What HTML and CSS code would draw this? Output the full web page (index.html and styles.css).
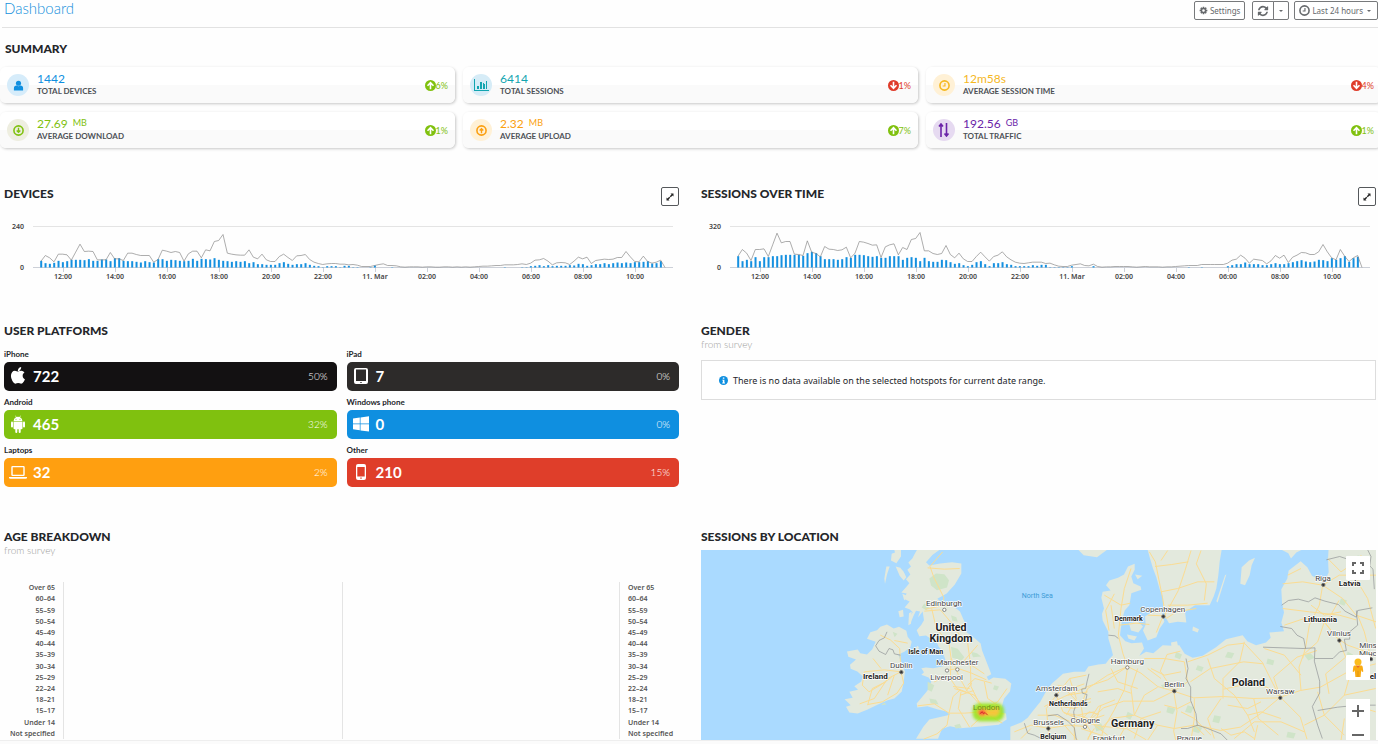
FILE: index.html
```html
<!DOCTYPE html>
<html lang="en">
<head>
    <meta charset="UTF-8">
    <meta name="viewport" content="width=device-width, initial-scale=1.0">
    <title>Dashboard</title>
    <link rel="stylesheet" href="styles.css">
</head>
<body>
    <svg class="sprite" aria-hidden="true">
        <symbol id="arrow-up" viewBox="0 0 24 24">
            <circle cx="12" cy="12" r="12" fill="currentColor"/>
            <path d="M12 20V6M5.500 12.500L12 6l6.500 6.500" fill="none" stroke="#fff" stroke-width="3.500"/>
        </symbol>
        <symbol id="arrow-down" viewBox="0 0 24 24">
            <circle cx="12" cy="12" r="12" fill="currentColor"/>
            <path d="M12 4v14M5.500 11.500L12 18l6.500-6.500" fill="none" stroke="#fff" stroke-width="3.500"/>
        </symbol>
        <symbol id="clock" viewBox="0 0 24 24">
            <circle cx="12" cy="12" r="10" fill="none" stroke="currentColor" stroke-width="3.500"/>
            <path d="M13 6.500V13H8" fill="none" stroke="currentColor" stroke-width="2.500"/>
        </symbol>
        <symbol id="expand" viewBox="0 0 16 16">
            <path d="M9 1h6v6l-2-2-3.500 3.500-2-2L11 3zM7 15H1V9l2 2 3.500-3.500 2 2L5 13z" fill="currentColor"/>
        </symbol>
    </svg>

    <main>
        <header class="topbar">
            <h1>Dashboard</h1>
            <div class="toolbar">
                <button class="btn" type="button">
                    <svg class="icon-sm" viewBox="0 0 1792 1792"><path fill="currentColor" d="M1152 896q0-106-75-181t-181-75-181 75-75 181 75 181 181 75 181-75 75-181zm512-109v222q0 12-8 23t-20 13l-185 28q-19 54-39 91 35 50 107 138 10 12 10 25t-9 23q-27 37-99 108t-94 71q-12 0-26-9l-138-108q-44 23-91 38-16 136-29 186-7 28-36 28h-222q-14 0-24.500-8.500t-11.500-21.500l-28-184q-49-16-90-37l-141 107q-10 9-25 9-14 0-25-11-126-114-165-168-7-10-7-23 0-12 8-23 15-21 51-66.500t54-70.500q-27-50-41-99l-183-27q-13-2-21-12.500t-8-23.500v-222q0-12 8-23t19-13l186-28q14-46 39-92-40-57-107-138-10-12-10-24 0-10 9-23 26-36 98.500-107.500t94.500-71.500q13 0 26 10l138 107q44-23 91-38 16-136 29-186 7-28 36-28h222q14 0 24.500 8.500t11.500 21.500l28 184q49 16 90 37l142-107q9-9 24-9 13 0 25 10 129 119 165 170 7 8 7 22 0 12-8 23-15 21-51 66.500t-54 70.500q26 50 41 98l183 28q13 2 21 12.500t8 23.500z"/></svg>
                    Settings
                </button>
                <div class="btn-group">
                    <button class="btn" type="button" aria-label="Refresh">
                        <svg class="icon-lg" viewBox="0 0 1792 1792"><path fill="currentColor" d="M1639 1056q0 5-1 7-64 268-268 434.500t-478 166.500q-146 0-282.500-55t-243.500-157l-129 129q-19 19-45 19t-45-19-19-45v-448q0-26 19-45t45-19h448q26 0 45 19t19 45-19 45l-137 137q71 66 161 102t187 36q134 0 250-65t186-179q11-17 53-117 8-23 30-23h192q13 0 22.500 9.500t9.500 22.500zm25-800v448q0 26-19 45t-45 19h-448q-26 0-45-19t-19-45 19-45l138-138q-148-137-349-137-134 0-250 65t-186 179q-11 17-53 117-8 23-30 23h-199q-13 0-22.500-9.500t-9.500-22.500v-7q65-268 270-434.500t480-166.500q146 0 284 55.500t245 156.500l130-129q19-19 45-19t45 19 19 45z"/></svg>
                    </button>
                    <button class="btn" type="button" aria-label="Refresh options"><span class="caret"></span></button>
                </div>
                <button class="btn" type="button">
                    <svg class="icon-md"><use href="#clock"/></svg>
                    Last 24 hours
                    <span class="caret"></span>
                </button>
            </div>
        </header>

        <h2 class="summary-title">Summary</h2>
        <section class="summary">
            <article class="card blue">
                <span class="badge"><svg viewBox="0 0 12 12"><circle cx="6" cy="3.500" r="2.800" fill="currentColor"/><path d="M1 11.500V9q0-3 3-3 2 1.500 4 0 3 0 3 3v2.500z" fill="currentColor"/></svg></span>
                <div class="stat"><p class="value">1442</p><p class="label">Total devices</p></div>
                <span class="trend up"><svg><use href="#arrow-up"/></svg>6%</span>
            </article>
            <article class="card teal">
                <span class="badge wide"><svg viewBox="0 0 15 12"><path d="M0 0h1v11h14v1H0zM3 7h2v3H3zM6 3h2v7H6zM9 4h1v6H9zM10 5h1v5h-1zM12 2h1v8h-1z" fill="currentColor"/></svg></span>
                <div class="stat"><p class="value">6414</p><p class="label">Total sessions</p></div>
                <span class="trend down"><svg><use href="#arrow-down"/></svg>1%</span>
            </article>
            <article class="card yellow">
                <span class="badge"><svg><use href="#clock"/></svg></span>
                <div class="stat"><p class="value">12m58s</p><p class="label">Average session time</p></div>
                <span class="trend down"><svg><use href="#arrow-down"/></svg>4%</span>
            </article>
            <article class="card green">
                <span class="badge"><svg viewBox="0 0 24 24"><g fill="none" stroke="currentColor"><circle cx="12" cy="12" r="10" stroke-width="3.500"/><path d="M12 6v10M8 12l4 4 4-4" stroke-width="3"/></g></svg></span>
                <div class="stat"><p class="value">27.69 <small>MB</small></p><p class="label">Average download</p></div>
                <span class="trend up"><svg><use href="#arrow-up"/></svg>1%</span>
            </article>
            <article class="card orange">
                <span class="badge"><svg viewBox="0 0 24 24"><g fill="none" stroke="currentColor"><circle cx="12" cy="12" r="10" stroke-width="3.500"/><path d="M12 18V8M8 12l4-4 4 4" stroke-width="3"/></g></svg></span>
                <div class="stat"><p class="value">2.32 <small>MB</small></p><p class="label">Average upload</p></div>
                <span class="trend up"><svg><use href="#arrow-up"/></svg>7%</span>
            </article>
            <article class="card purple">
                <span class="badge tall"><svg viewBox="0 0 12 14"><path d="M3 14V1M1 3.500L3 1l2 2.500M8.500 0v13M6.500 10.500l2 2.500 2-2.500" fill="none" stroke="currentColor" stroke-width="1.600"/></svg></span>
                <div class="stat"><p class="value">192.56 <small>GB</small></p><p class="label">Total traffic</p></div>
                <span class="trend up"><svg><use href="#arrow-up"/></svg>1%</span>
            </article>
        </section>

        <div class="panels">
            <section class="panel charts-row">
                <div class="panel-head">
                    <h2>Devices</h2>
                    <button class="expand" type="button" aria-label="Expand devices"><svg><use href="#expand"/></svg></button>
                </div>
                <svg class="chart" id="devicesChart" viewBox="0 0 675 65"></svg>
            </section>
            <section class="panel charts-row">
                <div class="panel-head">
                    <h2>Sessions over time</h2>
                    <button class="expand" type="button" aria-label="Expand sessions"><svg><use href="#expand"/></svg></button>
                </div>
                <svg class="chart" id="sessionsChart" viewBox="0 0 675 65"></svg>
            </section>

            <section class="panel platforms-row">
                <h2>User platforms</h2>
                <div class="platforms">
                    <div class="platform">
                        <p>iPhone</p>
                        <div class="bar black">
                            <svg viewBox="0 0 1792 1792"><path fill="currentColor" d="M1585 1215q-39 125-123 250-129 196-257 196-49 0-140-32-86-32-151-32-61 0-142 33-81 34-132 34-152 0-301-259-147-261-147-503 0-228 113-374 113-144 284-144 72 0 177 30 104 30 138 30 45 0 143-34 102-34 173-34 119 0 213 65 52 36 104 100-79 67-114 118-65 94-65 207 0 124 69 223t158 126zm-376-1173q0 61-29 136-30 75-93 138-54 54-108 72-37 11-104 17 3-149 78-257 74-107 250-148 1 3 2.500 11t2.500 11q0 4 .5 10t.5 10z"/></svg>
                            <strong>722</strong><span>50%</span>
                        </div>
                    </div>
                    <div class="platform">
                        <p>iPad</p>
                        <div class="bar charcoal">
                            <svg viewBox="0 0 18 18"><path fill="currentColor" fill-rule="evenodd" d="M4 1h10q2 0 2 2v12q0 2-2 2H4q-2 0-2-2V3q0-2 2-2zm0 1.500v11.500h10V2.500zM8.300 15v1h1.400v-1z"/></svg>
                            <strong>7</strong><span>0%</span>
                        </div>
                    </div>
                    <div class="platform">
                        <p>Android</p>
                        <div class="bar green-bg">
                            <svg viewBox="0 0 18 18"><g fill="currentColor"><path d="M4.500 6.200Q4.700 3 7 2.200L6.200.8l.4-.2.9 1.400q1.500-.5 3 0l.9-1.400.4.2L11 2.200q2.300.8 2.500 4z"/><path d="M4.500 6.800h9v6.400q0 1-1 1h-.8V17q0 1-1 1t-1-1v-2.800H8.300V17q0 1-1 1t-1-1v-2.800h-.8q-1 0-1-1z"/><rect x="2" y="6.600" width="2" height="6" rx="1"/><rect x="14" y="6.600" width="2" height="6" rx="1"/></g><circle cx="7" cy="4.300" r=".5" fill="#80c10f"/><circle cx="11" cy="4.300" r=".5" fill="#80c10f"/></svg>
                            <strong>465</strong><span>32%</span>
                        </div>
                    </div>
                    <div class="platform">
                        <p>Windows phone</p>
                        <div class="bar blue-bg">
                            <svg viewBox="0 0 18 18"><path fill="currentColor" d="M1 3.500l6.800-1v6H1zM8.500 2.400L17 1.200v7.300H8.500zM1 9.300h6.800v6l-6.800-1zM8.500 9.300H17v7.300l-8.500-1.200z"/></svg>
                            <strong>0</strong><span>0%</span>
                        </div>
                    </div>
                    <div class="platform">
                        <p>Laptops</p>
                        <div class="bar orange-bg">
                            <svg viewBox="0 0 18 18"><path fill="currentColor" fill-rule="evenodd" d="M3.500 3h11q1.200 0 1.200 1.200v7.600q0 1.200-1.200 1.200h-11q-1.200 0-1.200-1.200V4.200Q2.300 3 3.500 3zm.2 1.300v7.400h10.600V4.300zM0 14h18v.8q0 1-1.500 1h-15Q0 15.800 0 14.800z"/></svg>
                            <strong>32</strong><span>2%</span>
                        </div>
                    </div>
                    <div class="platform">
                        <p>Other</p>
                        <div class="bar red-bg">
                            <svg viewBox="0 0 18 18"><path fill="currentColor" fill-rule="evenodd" d="M6 1h6q2 0 2 2v12q0 2-2 2H6q-2 0-2-2V3q0-2 2-2zm-.7 3v9.500h7.400V4zM8.300 14.500v1.300h1.400v-1.300z"/></svg>
                            <strong>210</strong><span>15%</span>
                        </div>
                    </div>
                </div>
            </section>
            <section class="panel platforms-row">
                <h2>Gender</h2>
                <p class="sub">from survey</p>
                <div class="notice">
                    <svg viewBox="0 0 16 16"><circle cx="8" cy="8" r="8" fill="#0f8fe0"/><path d="M6.800 2.800h2.700v2.200H6.800zM5.800 6.500h3.800v5h1v1.700H5.700v-1.700h1.200V8.200H5.800z" fill="#fff"/></svg>
                    There is no data available on the selected hotspots for current date range.
                </div>
            </section>

            <section class="panel">
                <h2>Age breakdown</h2>
                <p class="sub">from survey</p>
                <div class="age-chart">
                    <ul class="ages" id="agesLeft"></ul>
                    <div class="plot"></div>
                    <div class="plot"></div>
                    <ul class="ages right" id="agesRight"></ul>
                </div>
            </section>
            <section class="panel">
                <h2>Sessions by location</h2>
                <div class="map">
                    <svg class="map-canvas" viewBox="20 74 2025 571" preserveAspectRatio="xMidYMid slice">
                        <defs>
                            <filter id="soft" x="-20%" y="-30%" width="140%" height="160%"><feGaussianBlur stdDeviation="5"/></filter>
                        </defs>
                        <rect x="0" y="0" width="2100" height="700" fill="#aadaff"/>

                        <!-- British Isles -->
                        <g class="land">
                            <path d="M668 74l-8 14-6 12-12 12 8 12-11 10 9 14-13 14 10 12-8 10-16 18 16 3-9 16 18 8-15 18 16 6 8 8-10 16 4 16 8-20 8-16 12 2-6 18 14-18 4 26-8 14-14 16 8 18 20-2 18 12 12 4 8 18 10 10 10 28-6 20-30 6-22-2-14 2 8 12-8 8 22 8 8 12-12 28-32 38 2 12 30-4 32 10 26 6 10 10-36 8-26 6-18 22-16 26-6 10h66l12-30 24-8 30 6 28-2 42-4 46-4 24-16-2-18-28-4 14-12 8-28 18-22 4-24-18-14-36-4-14 8-6-10 14-8-14-36-14-36-4-20-18-16-24-18-6-30-14-32-26-20-30-8-12-10 28-16 24-26 20-34v-30l-28-4-36 4-32 6-10-10 20-22 22-16 4-10z"/>
                            <path d="M578 298l20 12 16-5 22 12 4 18 12 15-4 16-18 14-18 8 6 17 7 15 7 20-4 30-6 30-22 20-20 5-34 15-26 13-30 12-25-3-10-17 14-5-18-18 24-4-10-18 26-6-11-11 21-14 4-16-16-14-20-8-2-12 18-16-23-8-4-16 32-6 8 11 20 4 16-16 10-22-26-9 10-20 20-6 10-10z"/>
                            <path d="M592 86l10-4-2-8h20v20l-14 20-16-8zM576 124h10l-8 24-6 28-2-16zM604 124l14 4 10 12 8 16-8 10-12-14zM624 206l14 6-8 14zM612 258l14-4 2 20-12 2zM644 264l8-4-2 36-8 4zM662 370l8-8 4 6-8 10z"/>
                        </g>

                        <g transform="translate(1020)">
                            <g class="land">
                                <path d="M-72 645v-40l34-14 18-13 12-16 26-32 14-26 20-28 34-30 34-6h32l10-16 30-6 22-2 12-16 10-10-6-24-8-26v-20l-17-34-2-20 6-16-8-32 4-18 24-4-14-16 10-14 26-8 18-10 12-24 20-8v18l-10 20 6 20 22 10 2 10-30 10-2 14-4 22-14 16-8 28-6 46 16 18 18 6 32-2 6 18-14 22 20-12 22 4 28-24 30 2 20-2 16 26 24 12 30-6 40-26 30-24 50-12 14 18 26 12 30-8 14-14-4-16 44-4-8-26 8-30-6-30-2-40 18-32 4-24 36-28 20 18 14 26 36 20 14-30-2-40 2-36h200v600z"/>
                                <path d="M340 74l6 22 10 34 10 26 10 36 10 24v24l10 40 8 14 26-4 26 2-4-32 30-20 44 0 12-26 8-24 6-40 4-40 6-36zM332 274l36-24 16 14 6 26-14 20-10 26-26 10-14-30 8-18zM284 294l26-6 16 16-14 18-22-6zM278 328l30 6-8 12-18-6zM576 148l-26 84-4-4 26-78zM662 98l-18 8-22 20-4 50 14 4 14-30 6-30zM476 304l18 8-4 10-16-6zM132 74l16 16 40 6 30-22zM742 74h60l-16 8-16 18-8-16zM302 148l22 4-14 10zM410 352l18-4 4 20-20 2z"/>
                            </g>
                        </g>

                        <g class="parks">
                            <path d="M705 160l20-15 25 2 14 18-6 22-30 8-18-14zM770 365l20 6 20 25-8 10-28-8zM700 470l20 10-8 20-12-6zM705 520l20 4 8 14-24-4zM690 235l16 10-10 10-14-8zM865 545l12-6 10 12-12 6zM780 600l16-4 6 12-18 2zM900 480l14 4-6 12-12-4zM770 270l16 6 4 14-16-4zM830 380l18 4 12 10-24 2zM595 320l14 6-8 10zM560 540l10-8 6 6z"/>
                            <path d="M1480 540l18 6-8 18-18-4zM1560 570l20 4-6 20-20-4zM1420 545l24 6-8 16-20-6zM1200 600l20-6 10 18-24 6zM1445 380l18 8-6 14-16-6zM1600 380l20 4-8 16-20-4zM1830 390l18-6 14 14-20 8zM1720 400l20 6-4 14-20-4zM1960 380l16 8-4 18-18-4zM1940 220l18 6-8 16-16-6zM1510 420l18 6-6 14-18-6zM1500 600l24 8-10 16-20-6zM1400 480l16-6 8 12-16 6zM1990 90l20 6-4 20-20-4zM1300 560l16 8-8 16-14-8zM1780 620l24 4-6 16-22-4z"/>
                        </g>

                        <g class="roads">
                            <path d="M745 80l-38 44 12 34 30 60-6 24-50 10M690 258l48-4 34 40 24 36 24 24 8 60 2 70 30 60 20 28M712 250l14 60 38 44 6 44 26 60 20 36 46 50M752 436l40-6 40 14 44 20M770 400l-2 60 20 30 26 10 18-26M780 490l60 20 30 40 40-20 28-40M670 542l50-6 44 28 46 0 60-4 60 6M764 566l-6 34-30 26-40 16M764 564l12-50 22-20M800 500l-8 50 34 56M830 604l44-40 50 30M870 470l10 50 30 20M720 470l40-20M700 128l50 4 46-2M850 360l-40 46 60 40M820 480l22-20 50 14M798 510l40-14M776 484l50 6"/>
                            <path d="M620 440l-50-6-60 6M620 440l-4-70-28-26-30-14M620 440l-40 20-40 60-44 16M620 440l8 34-20 30-44 26-44 8M600 450l-20 60M510 440l-6 40 20 20 34-20 34-24M560 430l-24-30M600 346l40 8M520 540l14-50 40-20"/>
                        </g>
                        <g class="roads" transform="translate(1020)">
                            <!-- Scandinavia -->
                            <path d="M345 80l18 30 14 70 8 40 10 60M470 76l-18 60-20 60-24 44-16 30M362 124l50-6 50-8M400 240l60 0 60-6M380 200l50-10 60-20 50 0M396 280l30-20 60-10M500 76l-14 40 30 60-6 50M400 76l-20 30M290 130l-20 60-10 60-8 80 14 56M210 210l50 30 28-6M230 240l10 70M340 270l46 2-20 50M255 300l50-6 40 4M240 206l-26 50 10 60"/>
                            <!-- Benelux and Germany -->
                            <path d="M266 386l14 38 40 20 50 40 48 14M280 424l-60 40-60 20-70 30-60 30M280 424l-10 70-30 60-34 60-6 30M418 498l-60 30-90 0-60 20-56 50M418 498l10 60-10 60 6 27M418 498l60 20 90-4 90 6 80-2M418 498l-40-60 20-50 40-10M66 510l20 50 60 30 60 14 70 6 60 34M40 610l60-10 52 4 40-60 50-20M-60 620l50-20 56 10-10 35M-40 640l30-30M66 510l-30 40 6 60M66 510l40-50 50-10M150 600l-10-60 20-50 60-40 60-26M106 460l20 60-30 50M160 500l-60 10M200 610l30-30 70-10 70 30 50 10M300 570l30-60 40-24M330 400l60 0 60 10 10 60-42 28M420 610l60-10 30 30M370 600l-30 45M270 610l-20 35M120 590l0 55M180 560l-50 10-40-6M200 540l-20 60 40 30M310 430l-20 60 10 80M340 430l40 30M90 600l40 45M10 570l50 0 50 20M130 570l60 20M140 610l60 20M60 540l60 10 50-20"/>
                            <path d="M70 480l40 10 40-14M100 500l30 30 40-10M110 570l30 14 24-24 30 8M150 590l20 30-10 25M190 500l60-10 40 14M230 430l20 40 60 20M250 600l50 10 40-14M390 540l40 10 40-20M380 560l-60 20-20 60M440 440l-50 10-40-20M440 560l40 20-10 65M180 610l-20 30M210 570l-30 10-20 20"/>
                            <!-- Poland and the Baltics -->
                            <path d="M460 410l60-20 60-30 50-6 56 60M468 470l60-40 100-20 60 6M630 350l-14 60-50 50 0 60M520 400l20 60 60 50 40 60 20 50M686 416l30 60 22 40 60 60 20 66M738 516l-60 50-60 40-60 10-70-16M738 516l60-20 60-10 90-50 76-20M738 516l-20-60 70-60 60-20M560 520l-40 60 20 60M658 520l14 60 60 50M600 640l60-50 80 0 70 30M690 370l60 20 50 60M800 496l-6-70 14-40M480 520l0 60 50 50M738 516l-40-30-60-10-70 16M810 600l60-30 60-60 94-20M850 500l20 70 60 60M930 580l-10 65M960 540l64 20M560 610l30 20 40-10 30 20M640 570l40-10 60 20M670 600l-10 45M580 540l60 10 40-20"/>
                            <path d="M865 180l-60-10-60 6M865 180l-10 60-30 60-10 60-10 40M865 180l50-30 110 0M865 180l60 40 40 50 60 20M745 250l80 10 90 10 50 14M750 300l60-20 60 10 40 50 30 20 84 30M870 290l-20 60-40 36M914 346l-40-50 40-70M880 100l40 40 60-40M760 150l40-20M914 346l20 50-60 50 10 60M1010 400l-60 40-20 70M1010 400l-20-80-20-50M980 90l-10 80 30 50 24 90M830 240l40 30 50-10"/>
                        </g>
                        <g class="borders">
                            <path d="M578 320l-8 18-16 8-10 16 10 16 20 10 10-18 12 4 4 12 18 4"/>
                            <path transform="translate(1020)" d="M222 330l20 2 10 8M164 446l-6 24-4 20-12 2 2 12 14 4-4 20-28 6-8 26 4 30M-30 594l10 30 20 6 20 10M40 572l30-4 30 20 20 20 6 36M455 400l6 30-6 30 14 26 0 40 16 40 4 36M490 600l-30 10-20 0M490 600l30 10 40 16 20 20M686 366l120 4 36-2M842 368l-2 40 16 60 0 36-22 40 16 56 14 40M738 304l34 6 16 20 20 10 6 30M742 240l20-14 30-4 30 8 20-12 30 10 40 10 20 20 34 18 4-20 44-8M966 256l4 44-24 20 0 22-16 0 6 34-20 4-20 20-54 0M876 104l40-10 30 10 20-6 30 14 20 20 4 60M850 556l60-10 60-6 54 0M1000 74l10 20-4 30"/>
                        </g>

                        <g class="cities">
                            <circle cx="750" cy="254" r="5"/><circle cx="758" cy="436" r="5"/><circle cx="789" cy="433" r="5"/>
                            <circle cx="1299" cy="427" r="5"/><circle cx="1172" cy="605" r="5"/>
                        </g>
                        <g class="capitals">
                            <circle cx="621" cy="441" r="5"/><circle cx="1407" cy="274" r="5"/><circle cx="1086" cy="510" r="5"/>
                            <circle cx="1440" cy="498" r="5"/><circle cx="1062" cy="610" r="5"/><circle cx="1758" cy="518" r="5"/>
                            <circle cx="1887" cy="179" r="5"/><circle cx="1935" cy="346" r="5"/><circle cx="2030" cy="402" r="5"/>
                        </g>

                        <g class="heat" filter="url(#soft)">
                            <rect x="835" y="534" width="94" height="54" rx="22" fill="#98e51c"/>
                            <path d="M846 560l16-12 30 6 14-10 12 14-12 16-30-2-14 4z" fill="#f8c32e"/>
                            <ellipse cx="863" cy="562" rx="11" ry="9" fill="#ff3d2e"/>
                        </g>
                        <text class="london" x="876" y="554">London</text>
                        <path d="M856 566l8-6 4 6 4-4 8 8" fill="none" stroke="#d6322b" stroke-width="3"/>

                        <text class="sea" x="1029" y="219">North Sea</text>
                        <g class="city-names">
                            <text x="749" y="243">Edinburgh</text><text x="621" y="429">Dublin</text>
                            <text x="789" y="421">Manchester</text><text x="757" y="464">Liverpool</text>
                            <text x="1405" y="262">Copenhagen</text><text x="1299" y="416">Hamburg</text>
                            <text x="1440" y="486">Berlin</text><text x="1087" y="498">Amsterdam</text>
                            <text x="1063" y="599">Brussels</text><text x="1173" y="595">Cologne</text>
                            <text x="1244" y="648">Frankfurt</text><text x="1485" y="648">Prague</text>
                            <text x="1758" y="506">Warsaw</text><text x="1886" y="167">Riga</text>
                            <text x="1934" y="334">Vilnius</text><text x="2027" y="369">Minsk</text><text x="2027" y="393">Мінск</text>
                        </g>
                        <g class="country-names">
                            <text class="big" x="770" y="319">United</text><text class="big" x="770" y="350">Kingdom</text>
                            <text class="big" x="1315" y="606">Germany</text><text class="big" x="1662" y="483">Poland</text>
                            <text x="543" y="462">Ireland</text><text x="1878" y="290">Lithuania</text><text x="1966" y="184">Latvia</text>
                            <text x="2052" y="461">Belarus</text>
                            <text class="little" x="694" y="387">Isle of Man</text><text class="little" x="1303" y="289">Denmark</text>
                            <text class="little" x="1122" y="542">Netherlands</text><text class="little" x="1077" y="641">Belgium</text>
                        </g>
                    </svg>
                    <div class="map-controls">
                        <button type="button" aria-label="Full screen">
                            <svg viewBox="0 0 12 12"><path d="M1 4V1h3M8 1h3v3M11 8v3H8M4 11H1V8" fill="none" stroke="#666" stroke-width="2"/></svg>
                        </button>
                        <button class="pegman" type="button" aria-label="Street view">
                            <svg viewBox="0 0 12 20"><circle cx="6" cy="4" r="3.500" fill="#fbbc1e"/><path d="M2.500 7.500h7q1 0 1.200 1.500l.6 4.500-1.300.5-.8-2-.6 7H3.400l-.6-7-.8 2-1.300-.5.6-4.500q.2-1.500 1.200-1.500z" fill="#f9ab13"/><path d="M3.500 7q2.500 2 5 0L6 10z" fill="#e8662d"/><path d="M6 13v6" stroke="#d28a10" stroke-width=".6"/></svg>
                        </button>
                        <div class="zoom">
                            <button type="button" aria-label="Zoom in"><svg viewBox="0 0 12 12"><path d="M6 0v12M0 6h12" stroke="#666" stroke-width="2"/></svg></button>
                            <button type="button" aria-label="Zoom out"><svg viewBox="0 0 12 12"><path d="M0 6h12" stroke="#666" stroke-width="2"/></svg></button>
                        </div>
                    </div>
                </div>
            </section>
        </div>
    </main>
    <footer></footer>

    <script>
        // one entry per 10 minutes, starting at 11:10
        const devices = {
            max: 240,
            total: [19,36,29,17,40,40,38,22,46,70,48,49,48,23,23,23,45,26,26,21,43,43,39,36,36,36,16,24,52,49,45,48,45,19,41,49,49,29,53,50,78,81,99,43,40,38,37,37,53,31,26,40,23,18,18,33,40,30,21,35,36,39,24,16,12,9,11,12,12,10,10,8,9,7,3,3,3,6,9,11,6,6,5,2,1,2,2,2,1,2,2,1,1,2,2,1,2,1,2,1,2,3,4,4,5,6,6,8,8,8,9,11,9,13,22,23,27,19,8,14,15,14,9,19,31,26,31,12,21,23,25,24,25,30,30,48,32,18,17,34,18,13,16,22,0],
            bars: [20,13,11,14,20,16,19,23,23,23,22,25,20,20,24,24,19,28,28,20,19,19,17,15,19,16,15,25,25,20,23,22,20,19,20,26,20,26,25,24,28,23,20,19,17,19,17,19,13,16,10,10,8,8,8,13,16,11,8,10,10,13,8,5,4,1,4,4,4,1,5,5,1,1,0,0,1,6,0,0,0,1,0,0,0,0,0,0,0,0,0,0,0,0,0,0,0,0,0,0,0,0,0,0,0,0,0,1,0,0,0,1,1,4,5,7,4,7,4,5,5,5,7,6,11,10,5,7,10,10,13,10,13,15,13,15,13,16,16,17,19,12,13,19,0]
        };
        const sessions = {
            max: 320,
            total: [34,54,43,21,54,54,56,33,68,103,74,78,78,40,39,36,80,46,42,32,63,55,54,51,53,61,29,43,78,76,72,67,68,30,62,68,71,38,60,54,84,87,105,50,50,42,39,42,66,39,29,43,26,18,18,33,46,32,19,33,37,47,32,23,16,13,12,14,16,16,16,12,13,8,4,3,3,7,9,11,6,5,10,3,1,2,2,3,3,3,3,2,1,2,3,2,2,2,1,2,2,3,4,5,6,6,6,9,9,9,9,9,9,13,22,25,37,28,13,25,23,21,11,20,36,28,37,15,31,37,45,44,39,39,47,69,47,29,23,54,34,18,29,36,0],
            bars: [34,19,23,19,31,19,31,31,34,34,37,38,38,38,38,35,43,47,43,34,25,25,25,23,25,31,29,38,38,37,34,32,34,29,29,34,34,34,23,29,31,29,19,29,19,17,17,23,22,16,11,13,7,4,8,16,19,10,4,13,13,16,10,8,4,4,4,4,7,5,8,8,1,1,1,1,1,4,0,0,0,0,4,0,0,0,0,0,0,0,0,0,0,0,0,0,0,0,0,0,0,0,0,0,1,0,0,1,0,0,0,0,0,4,7,10,10,15,10,10,10,7,7,10,13,10,10,13,16,19,22,18,16,18,23,22,19,28,23,28,34,17,28,32,0]
        };
        const hours = ['12:00', '14:00', '16:00', '18:00', '20:00', '22:00', '11. Mar', '02:00', '04:00', '06:00', '08:00', '10:00'];
        const ages = ['Over 65', '60–64', '55–59', '50–54', '45–49', '40–44', '35–39', '30–34', '25–29', '22–24', '18–21', '15–17', 'Under 14', 'Not specified'];

        function drawChart(id, data) {
            const step = 13 / 3;
            const base = 47.5;
            let out = '<path class="grid" d="M29 6.500H669"/><path class="axis" d="M29 47.500H669"/>';
            hours.forEach((h, i) => {
                const x = Math.round(59 + i * 52);
                out += `<path class="axis" d="M${x}.5 47v5"/><text class="tick" x="${x}" y="59">${h}</text>`;
            });
            data.bars.forEach((v, i) => {
                if (v) out += `<rect class="col" x="${36.2 + i * step}" y="${base - v / 3}" width="2" height="${v / 3}"/>`;
            });
            const points = data.total.map((v, i) => `${37 + i * step},${base - v / 3}`).join(' ');
            out += `<polyline class="line" points="${points}"/>`;
            out += `<text class="scale" x="20" y="9">${data.max}</text><text class="scale" x="20" y="50">0</text>`;
            document.getElementById(id).innerHTML = out;
        }

        drawChart('devicesChart', devices);
        drawChart('sessionsChart', sessions);

        const ageItems = ages.map(a => `<li>${a}</li>`).join('');
        document.getElementById('agesLeft').innerHTML = ageItems;
        document.getElementById('agesRight').innerHTML = ageItems;
    </script>
</body>
</html>
```
FILE: styles.css
```css
* {
    box-sizing: border-box;
}
body {
    display: flex;
    flex-direction: column;
    height: 100vh;
    margin: 0;
    overflow: hidden;
    font-family: Lato, sans-serif;
    color: #24262a;
    background: #fefefe;
}
h1, h2, p, ul {
    margin: 0;
    padding: 0;
}
button {
    font-family: inherit;
    cursor: pointer;
}
svg {
    display: block;
    flex: none;
}
.sprite {
    position: absolute;
    width: 0;
    height: 0;
}
main {
    flex: 1;
    min-height: 0;
    overflow: hidden;
}
footer {
    height: 4px;
    border-top: 1px solid #eee;
    background: #fbfbfb;
}

/* top bar */
.topbar {
    display: flex;
    justify-content: space-between;
    align-items: flex-start;
    height: 28px;
    margin-left: 2px;
    padding-left: 2px;
    border-bottom: 1px solid #e2e2e2;
}
h1 {
    font-size: 15px;
    line-height: 16px;
    font-weight: 300;
    color: #1490dc;
}
.toolbar {
    display: flex;
    gap: 5px;
    padding-top: 1px;
}
.btn {
    display: flex;
    align-items: center;
    gap: 2px;
    height: 19px;
    padding: 0 4px;
    border: 1px solid #77797b;
    border-radius: 2px;
    background: #fff;
    color: #66696c;
    font-family: "Noto Sans", sans-serif;
    font-size: 8px;
}
.btn-group {
    display: flex;
    margin-left: 2px;
}
.btn-group .btn:first-child {
    border-radius: 2px 0 0 2px;
}
.btn-group .btn:last-child {
    margin-left: -1px;
    border-radius: 0 2px 2px 0;
}
.icon-sm {
    width: 9px;
    height: 9px;
}
.icon-md {
    width: 11px;
    height: 11px;
}
.icon-lg {
    width: 12px;
    height: 12px;
}
.caret {
    margin: 0 2px;
    border: 2px solid transparent;
    border-top-color: currentColor;
    border-bottom: 0;
}
.btn-group .caret {
    margin: 0 1px;
}

h2 {
    font-size: 12px;
    line-height: 21px;
    font-weight: 900;
    text-transform: uppercase;
}
.summary-title {
    padding: 10px 0 0 5px;
}

/* summary cards */
.summary {
    display: grid;
    grid-template-columns: repeat(3, 1fr);
    gap: 9px 8px;
    margin: 8px -3px 0 0;
}
.card {
    display: flex;
    align-items: center;
    height: 36px;
    padding: 0 7px;
    border-radius: 6px;
    background: linear-gradient(#fff 50%, #fafafa 50%);
    box-shadow: 1px 1px 3px rgba(0, 0, 0, 0.22);
}
.badge {
    display: flex;
    align-items: center;
    justify-content: center;
    width: 22px;
    height: 22px;
    margin-right: 8px;
    border-radius: 50%;
}
.badge svg {
    width: 11px;
    height: 11px;
}
.badge.wide svg {
    width: 15px;
    height: 12px;
}
.badge.tall svg {
    width: 12px;
    height: 14px;
}
.stat {
    flex: 1;
    padding-bottom: 2px;
}
.value {
    font-size: 12px;
    line-height: 14px;
}
.value small {
    margin-left: 2px;
    font-size: 9px;
    line-height: 9px;
    vertical-align: 2px;
}
.label {
    font-size: 8px;
    line-height: 10px;
    font-weight: 700;
    text-transform: uppercase;
    color: #4d5156;
}
.blue { color: #0f8fe0; }
.blue .badge { background: #d6ecfa; }
.teal { color: #12a5b0; }
.teal .badge { background: #d6ecf7; }
.yellow { color: #f5b81f; }
.yellow .badge { background: #fff1d6; }
.green { color: #80c10f; }
.green .badge { background: #eeeee0; }
.orange { color: #fb9f10; }
.orange .badge { background: #fff1d6; }
.purple { color: #6b24a8; }
.purple .badge { background: #e6daf1; }
.trend {
    display: flex;
    align-items: center;
    font-size: 9px;
}
.trend svg {
    width: 11px;
    height: 11px;
}
.up { color: #80c10f; }
.down { color: #df3c2a; }

/* panels */
.panels {
    display: grid;
    grid-template-columns: 1fr 1fr;
    column-gap: 22px;
    padding: 35px 2px 0 4px;
}
.panel {
    min-width: 0;
}
.panel-head {
    display: flex;
    justify-content: space-between;
    align-items: flex-start;
}
.expand {
    display: flex;
    align-items: center;
    justify-content: center;
    width: 18px;
    height: 19px;
    margin-top: 4px;
    padding: 0;
    border: 1px solid #55585b;
    border-radius: 2px;
    background: #fff;
    color: #222;
}
.expand svg {
    width: 8px;
    height: 8px;
}
.charts-row {
    padding-bottom: 35px;
}
.chart {
    width: 100%;
    margin-top: 14px;
}
.grid {
    stroke: #e4e4e4;
}
.axis {
    stroke: #ccd0d8;
}
.col {
    fill: #1490e0;
}
.line {
    fill: none;
    stroke: #8a8a8a;
    stroke-width: 0.7px;
}
.tick, .scale {
    font-family: "Noto Sans", sans-serif;
    font-size: 7px;
    font-weight: 600;
    fill: #444;
}
.tick {
    text-anchor: middle;
}
.scale {
    text-anchor: end;
}

.platforms-row {
    padding-bottom: 39px;
}
.platforms {
    display: grid;
    grid-template-columns: 1fr 1fr;
    column-gap: 10px;
    margin-top: 2px;
}
.platform p {
    padding-top: 3px;
    font-size: 8px;
    line-height: 16px;
    font-weight: 700;
}
.bar {
    display: flex;
    align-items: center;
    height: 29px;
    padding: 0 9px 2px 5px;
    border-radius: 5px;
    color: #fff;
}
.bar svg {
    width: 18px;
    height: 18px;
}
.bar strong {
    flex: 1;
    padding-left: 6px;
    font-size: 15px;
}
.bar span {
    font-size: 10px;
    font-weight: 300;
}
.black { background: #131112; }
.charcoal { background: #2d2b2a; }
.green-bg { background: #80c10f; }
.blue-bg { background: #0f8fe0; }
.orange-bg { background: #ff9f10; }
.red-bg { background: #df3e2a; }

.sub {
    font-size: 10px;
    line-height: 6px;
    font-weight: 300;
    color: #a0a0a0;
}
.notice {
    display: flex;
    align-items: center;
    gap: 5px;
    height: 40px;
    margin-top: 13px;
    padding: 0 17px;
    border: 1px solid #ddd;
    background: #fff;
    font-family: "Noto Sans", sans-serif;
    font-size: 9px;
}
.notice svg {
    width: 9px;
    height: 9px;
}

/* age chart */
.age-chart {
    display: grid;
    grid-template-columns: 59px 1fr 1fr 59px;
    margin-top: 29px;
    height: 157px;
}
.ages {
    display: flex;
    flex-direction: column;
    justify-content: space-around;
    padding-right: 8px;
    list-style: none;
    font-family: "Noto Sans", sans-serif;
    font-size: 7px;
    line-height: 11px;
    font-weight: 600;
    text-align: right;
    color: #555;
}
.ages.right {
    padding: 0 0 0 8px;
    text-align: left;
}
.plot {
    border-left: 1px solid #e4e4e4;
}
.plot + .plot {
    border-right: 1px solid #e4e4e4;
}

/* map */
.map {
    position: relative;
    height: 190px;
    margin-top: 3px;
    overflow: hidden;
}
.map-canvas {
    width: 100%;
    height: 100%;
    font-family: Roboto, sans-serif;
    text-anchor: middle;
}
.land {
    fill: #e3e9dd;
}
.parks {
    fill: #cfe4c8;
}
.roads {
    fill: none;
    stroke: #fbdc92;
    stroke-width: 3px;
    stroke-linejoin: round;
}
.borders {
    fill: none;
    stroke: #8c9093;
    stroke-width: 2px;
}
.cities circle {
    fill: #fff;
    stroke: #555;
    stroke-width: 2px;
}
.capitals circle {
    fill: #333;
    stroke: #777;
    stroke-width: 3px;
}
.city-names text, .country-names text {
    stroke: #fff;
    stroke-width: 4px;
    stroke-linejoin: round;
    paint-order: stroke;
}
.city-names {
    font-size: 24px;
    fill: #444;
}
.country-names {
    font-size: 24px;
    font-weight: 700;
    fill: #222;
}
.big {
    font-size: 32px;
}
.little {
    font-size: 21px;
}
.sea {
    font-size: 21px;
    fill: #3d9bd6;
}
.london {
    font-size: 24px;
    fill: #6f8c1c;
}
.heat {
    opacity: 0.9;
}
.map-controls {
    position: absolute;
    top: 6px;
    right: 6px;
    width: 24px;
}
.map-controls button {
    display: flex;
    align-items: center;
    justify-content: center;
    width: 24px;
    height: 24px;
    padding: 0;
    border: 0;
    border-radius: 1px;
    background: #fff;
}
.map-controls svg {
    width: 12px;
    height: 12px;
}
.map-controls .pegman {
    height: 25px;
    margin-top: 75px;
}
.map-controls .pegman svg {
    height: 20px;
}
.zoom {
    margin-top: 19px;
    background: #fff;
}
```
